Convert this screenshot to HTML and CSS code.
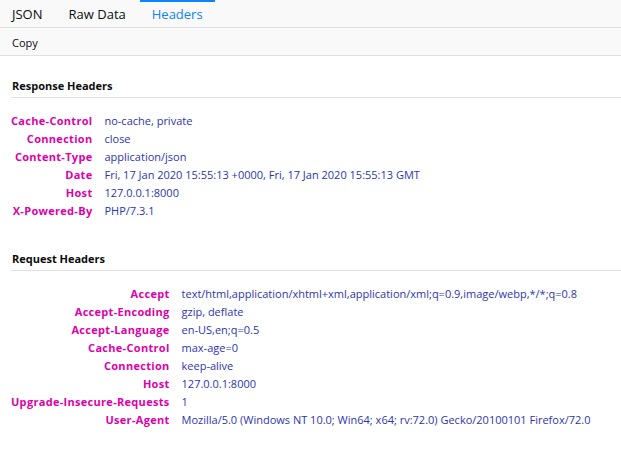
FILE: index.html
```html
<!DOCTYPE html>
<html>
<head>
<meta charset="utf-8">
<link rel="stylesheet" href="styles.css">
</head>
<body>
<div class="tabs">
  <div class="tab">JSON</div>
  <div class="tab">Raw Data</div>
  <div class="tab active">Headers</div>
</div>
<div class="toolbar">
  <span class="btn">Copy</span>
</div>
<div class="content">
  <section class="group">
    <h2 class="title">Response Headers</h2>
    <table class="headers">
      <tr><td class="name">Cache-Control</td><td class="value">no-cache, private</td></tr>
      <tr><td class="name">Connection</td><td class="value">close</td></tr>
      <tr><td class="name">Content-Type</td><td class="value">application/json</td></tr>
      <tr><td class="name">Date</td><td class="value">Fri, 17 Jan 2020 15:55:13 +0000, Fri, 17 Jan 2020 15:55:13 GMT</td></tr>
      <tr><td class="name">Host</td><td class="value">127.0.0.1:8000</td></tr>
      <tr><td class="name">X-Powered-By</td><td class="value">PHP/7.3.1</td></tr>
    </table>
  </section>
  <section class="group">
    <h2 class="title">Request Headers</h2>
    <table class="headers">
      <tr><td class="name">Accept</td><td class="value">text/html,application/xhtml+xml,application/xml;q=0.9,image/webp,*/*;q=0.8</td></tr>
      <tr><td class="name">Accept-Encoding</td><td class="value">gzip, deflate</td></tr>
      <tr><td class="name">Accept-Language</td><td class="value">en-US,en;q=0.5</td></tr>
      <tr><td class="name">Cache-Control</td><td class="value">max-age=0</td></tr>
      <tr><td class="name">Connection</td><td class="value">keep-alive</td></tr>
      <tr><td class="name">Host</td><td class="value">127.0.0.1:8000</td></tr>
      <tr><td class="name">Upgrade-Insecure-Requests</td><td class="value">1</td></tr>
      <tr><td class="name">User-Agent</td><td class="value">Mozilla/5.0 (Windows NT 10.0; Win64; x64; rv:72.0) Gecko/20100101 Firefox/72.0</td></tr>
    </table>
  </section>
</div>
</body>
</html>
```
FILE: styles.css
```css
html, body {
  margin: 0;
  padding: 0;
  background: #ffffff;
  font-family: "Open Sans", "Noto Sans", sans-serif;
  font-size: 11px;
  color: #0c0c0d;
}

.tabs {
  display: flex;
  height: 27px;
  background: #f9f9fa;
  border-bottom: 1px solid #e0e0e2;
}

.tab {
  box-sizing: border-box;
  height: 27px;
  padding: 0 12px;
  font-size: 13px;
  color: #0c0c0d;
  border-top: 2px solid transparent;
  line-height: 24px;
}

.tab + .tab { margin-left: 2px; }

.tab.active {
  color: #0a84ff;
  border-top-color: #0a84ff;
}

.toolbar {
  background: #f9f9fa;
  border-bottom: 1px solid #e0e0e2;
  display: flex;
  align-items: center;
  padding: 2px 0 0 12px;
  box-sizing: border-box;
  height: 28px;
}

.btn {
  font-size: 11px;
  color: #0c0c0d;
}

.content {
  padding: 22px 0 0 11px;
}

.group {
  margin-bottom: 31px;
}

.title {
  margin: 0 0 14px 0;
  font-size: 11px;
  font-weight: bold;
  padding: 0 0 4px 1px;
  border-bottom: 1px solid #e0e0e2;
}

.headers {
  border-collapse: collapse;
}

.headers td {
  padding: 0;
  height: 18px;
  line-height: 18px;
  white-space: nowrap;
}

.name {
  text-align: right;
  color: #dd00a9;
  font-weight: 700;
  letter-spacing: 0.3px;
  padding-right: 12px !important;
}

.value {
  color: #2b35b3;
}
```
